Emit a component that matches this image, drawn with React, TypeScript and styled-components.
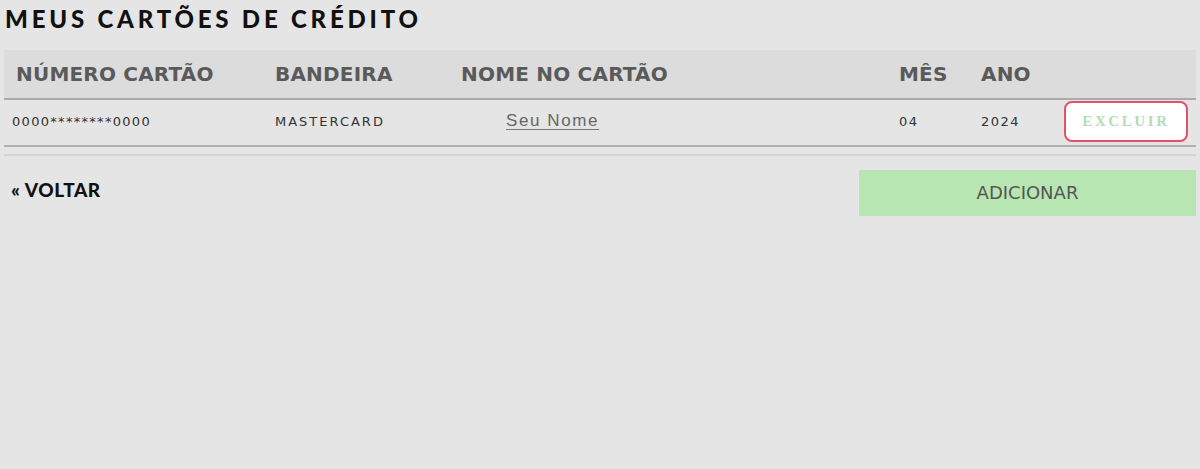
import React from 'react';
import { styled, createGlobalStyle } from 'styled-components';

const GlobalStyle = createGlobalStyle`
    html, body {
        margin: 0;
        padding: 0;
        background: #e5e5e5;
    }
    body {
        font-family: "DejaVu Sans", Verdana, sans-serif;
    }
`;

// ---------------- <Page /> --------------------------------------

const Page = styled.div`
    min-height: 469px;
    padding: 3px 4px 0 4px;
    box-sizing: border-box;
    background: #e5e5e5;
`;

const Title = styled.h1`
    margin: 0 0 0 1px;
    font-family: "Lato", "Noto Sans", sans-serif;
    font-weight: 900;
    font-size: 24px;
    letter-spacing: 3.8px;
    line-height: 32px;
    color: #111;
`;

// ---------------- <CardTable /> --------------------------------------

const cols = '259px 186px 438px 82px 83px 1fr';

const CardTable = styled.div`
    margin-top: 15px;
    border-bottom: 2px solid #d4d4d4;
    padding-bottom: 7px;
`;

const HeadRow = styled.div`
    display: grid;
    grid-template-columns: ${cols};
    align-items: center;
    height: 48px;
    background: #dcdcdc;
    border-bottom: 2px solid #ababab;
`;

const HeadCell = styled.div`
    padding-left: 12px;
    font-family: "DejaVu Sans", Verdana, sans-serif;
    font-weight: bold;
    font-size: 20px;
    letter-spacing: 0.2px;
    color: #5a5a5a;
    white-space: nowrap;
`;

const BodyRow = styled.div`
    display: grid;
    grid-template-columns: ${cols};
    align-items: center;
    height: 47px;
    padding-bottom: 3px;
    box-sizing: border-box;
    border-bottom: 2px solid #b0b0b0;
`;

const Cell = styled.div<{ $pad?: number; $spacing?: number }>`
    padding-left: ${p => p.$pad ?? 12}px;
    font-family: "DejaVu Sans", Verdana, sans-serif;
    font-size: 13px;
    letter-spacing: ${p => p.$spacing ?? 1.3}px;
    color: #333;
    white-space: nowrap;
`;

const NameLink = styled.a`
    font-family: "Liberation Sans", Arial, sans-serif;
    font-size: 17px;
    letter-spacing: 1.6px;
    color: #666;
    text-decoration: underline;
    text-underline-offset: 3px;
    text-decoration-color: #777;
`;

const DeleteButton = styled.button`
    margin-left: 12px;
    width: 124px;
    height: 41px;
    background: #fff;
    border: 2px solid #e4506a;
    border-radius: 8px;
    font-family: "Liberation Serif", Georgia, serif;
    font-weight: bold;
    font-size: 15px;
    letter-spacing: 2.6px;
    color: #b3ddb3;
    cursor: pointer;
`;

// ---------------- <Footer /> --------------------------------------

const Footer = styled.div`
    display: flex;
    justify-content: space-between;
    align-items: center;
    margin-top: 14px;
`;

const BackLink = styled.a`
    margin-left: 7px;
    margin-bottom: 8px;
    font-family: "Lato", "Noto Sans", sans-serif;
    font-weight: 900;
    font-size: 19px;
    letter-spacing: 0.6px;
    color: #111;
    text-decoration: none;
`;

const AddButton = styled.button`
    width: 337px;
    height: 46px;
    padding-bottom: 2px;
    background: #b8e6b3;
    border: none;
    font-family: "DejaVu Sans", Verdana, sans-serif;
    font-size: 18px;
    color: #555;
    cursor: pointer;
`;

const cards = [
    { number: '0000********0000', brand: 'MASTERCARD', name: 'Seu Nome', month: '04', year: '2024' },
];

export default function App() {
    return (
        <>
            <GlobalStyle />
            <Page>
                <Title>MEUS CARTÕES DE CRÉDITO</Title>
                <CardTable>
                    <HeadRow>
                        <HeadCell>NÚMERO CARTÃO</HeadCell>
                        <HeadCell>BANDEIRA</HeadCell>
                        <HeadCell>NOME NO CARTÃO</HeadCell>
                        <HeadCell>MÊS</HeadCell>
                        <HeadCell>ANO</HeadCell>
                        <HeadCell />
                    </HeadRow>
                    {cards.map((c, i) => (
                        <BodyRow key={i}>
                            <Cell $pad={8}>{c.number}</Cell>
                            <Cell $spacing={2}>{c.brand}</Cell>
                            <Cell $pad={57}><NameLink href="#">{c.name}</NameLink></Cell>
                            <Cell $spacing={1.5}>{c.month}</Cell>
                            <Cell $spacing={1.5}>{c.year}</Cell>
                            <Cell $pad={0}><DeleteButton>EXCLUIR</DeleteButton></Cell>
                        </BodyRow>
                    ))}
                </CardTable>
                <Footer>
                    <BackLink href="#">« VOLTAR</BackLink>
                    <AddButton>ADICIONAR</AddButton>
                </Footer>
            </Page>
        </>
    );
}
